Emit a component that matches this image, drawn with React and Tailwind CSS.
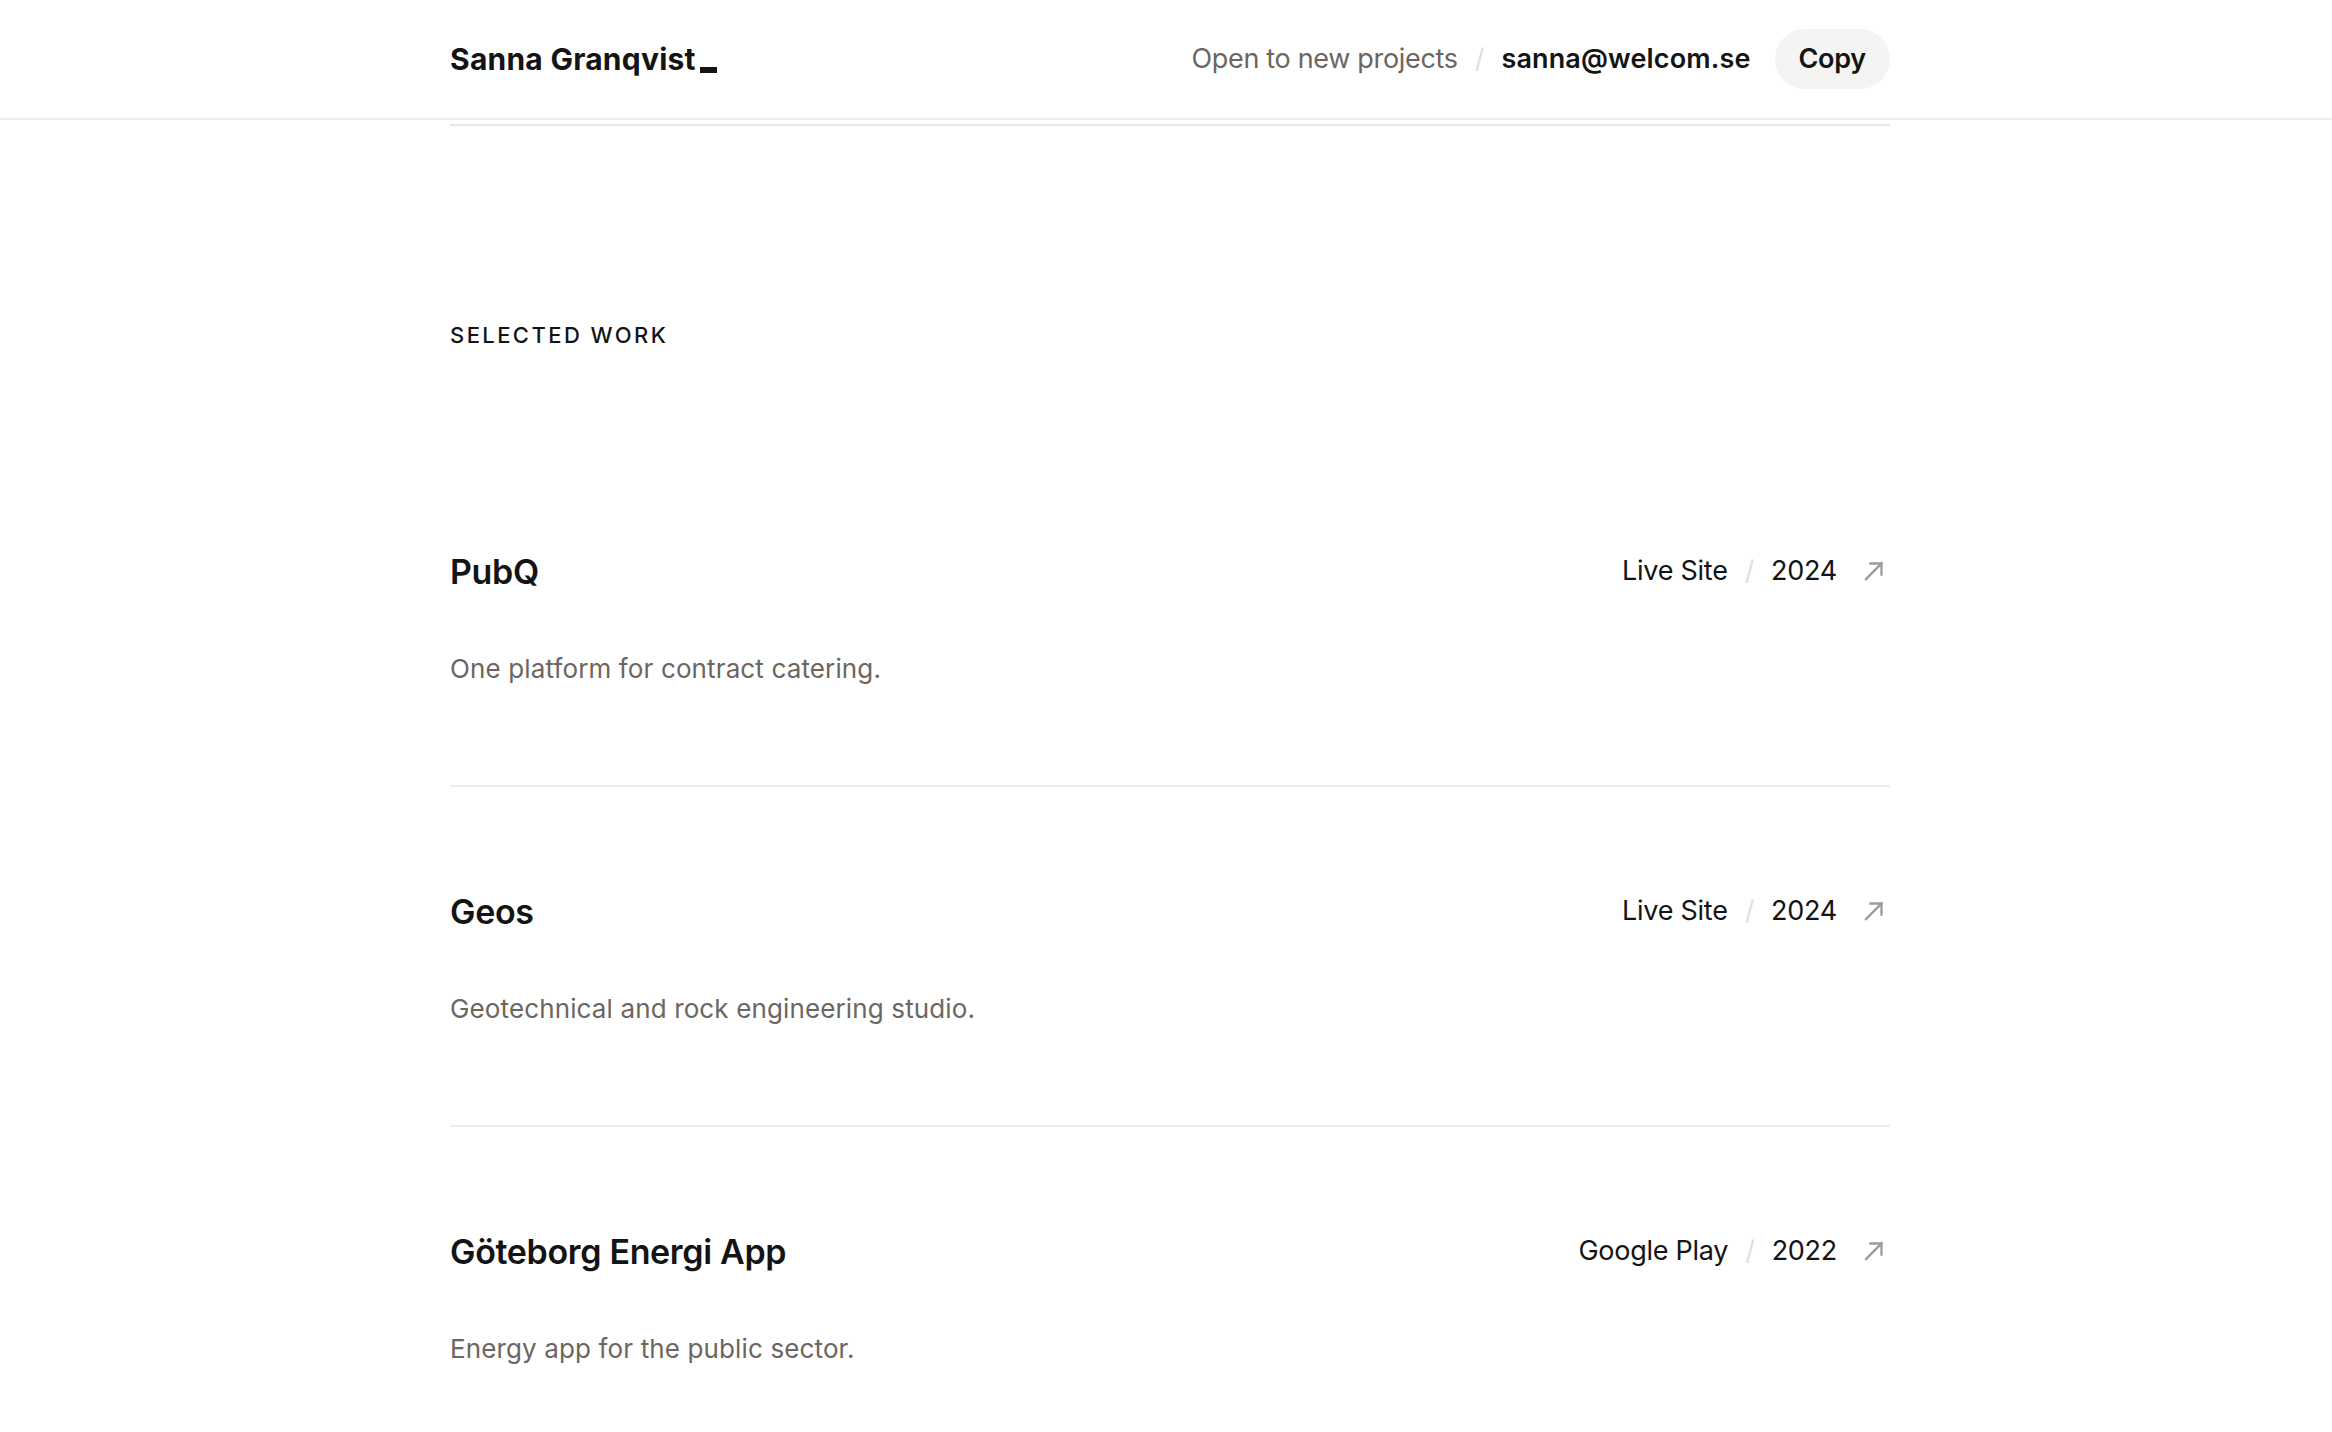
const projects = [
  {
    name: "PubQ",
    description: "One platform for contract catering.",
    source: "Live Site",
    year: "2024",
  },
  {
    name: "Geos",
    description: "Geotechnical and rock engineering studio.",
    source: "Live Site",
    year: "2024",
  },
  {
    name: "Göteborg Energi App",
    description: "Energy app for the public sector.",
    source: "Google Play",
    year: "2022",
  },
];

function ArrowUpRight() {
  return (
    <svg
      width="20"
      height="20"
      viewBox="0 0 20 20"
      fill="none"
      stroke="#9b9b9b"
      strokeWidth="2.3"
      strokeLinecap="square"
    >
      <path d="M2 18 L17.5 2.5" />
      <path d="M6.5 2.5 H17.5 V13.5" />
    </svg>
  );
}

export default function App() {
  return (
    <div className="min-h-screen bg-white text-[#141414] font-['Inter',sans-serif]">
      {/* Top bar */}
      <header className="border-b-2 border-[#f1eeea] pl-2">
        <div className="max-w-[1440px] mx-auto h-[118px] flex items-center justify-between">
          <div className="flex items-end text-[30px] font-bold tracking-[0.008em] leading-none">
            <span>Sanna Granqvist</span>
            <span className="ml-[4px] mb-[1px] w-[17px] h-[6px] bg-[#141414]"></span>
          </div>

          <div className="flex items-center text-[27px]">
            <span className="text-[#6b6661] tracking-[-0.012em]">Open to new projects</span>
            <span className="mx-[17px] text-[#e4dfd9]">/</span>
            <span className="font-semibold tracking-[0.005em]">sanna@welcom.se</span>
            <button className="ml-[24px] h-[60px] px-[24px] rounded-full bg-[#f4f4f3] font-semibold tracking-[-0.01em]">
              Copy
            </button>
          </div>
        </div>
      </header>

      <main className="pl-2">
        <div className="max-w-[1440px] mx-auto mt-1 border-t-2 border-[#ebe7e2]">
          <h2 className="pt-[193px] text-[22px] leading-[32px] font-medium tracking-[0.11em] uppercase">
            Selected Work
          </h2>

          <div className="mt-[96px]">
            {projects.map((project, i) => (
              <div
                key={project.name}
                className={
                  i < projects.length - 1
                    ? "pt-[104px] pb-[98px] border-b-2 border-[#f1eeea]"
                    : "pt-[104px] pb-[98px]"
                }
              >
                <div className="flex items-center justify-between h-[40px]">
                  <h3 className="text-[34px] font-semibold tracking-[-0.01em]">
                    {project.name}
                  </h3>
                  <div className="flex items-center text-[27px] tracking-[-0.01em]">
                    <span>{project.source}</span>
                    <span className="mx-[17px] text-[#e4dfd9]">/</span>
                    <span>{project.year}</span>
                    <span className="ml-[27px] mr-[6px] flex items-center">
                      <ArrowUpRight />
                    </span>
                  </div>
                </div>
                <p className="mt-[60px] text-[26px] leading-[36px] text-[#6b6661] tracking-[0.005em]">
                  {project.description}
                </p>
              </div>
            ))}
          </div>
        </div>
      </main>
    </div>
  );
}
